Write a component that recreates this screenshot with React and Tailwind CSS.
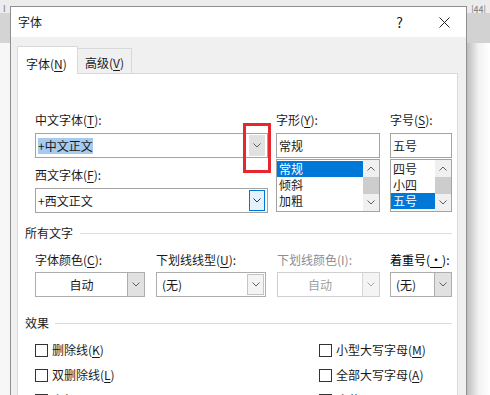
import { useState } from 'react'

function Chevron({ up = false, color = '#606060' }) {
  return (
    <svg width="8" height="5" viewBox="0 0 8 5" fill="none" stroke={color} strokeWidth="1">
      <path d={up ? 'M0.5 4.5L4 1L7.5 4.5' : 'M0.5 0.5L4 4L7.5 0.5'} />
    </svg>
  )
}

function Lbl({ text, k, end = ':' }) {
  return (
    <span className="whitespace-nowrap">
      {text}(<span className="underline underline-offset-2">{k}</span>){end}
    </span>
  )
}

function ListBox({ items, selected }) {
  return (
    <div className="mt-[1px] flex h-[53px] border border-[#a3a3a3] bg-white">
      <div className="flex-1 pt-[1px]">
        {items.map((it) => (
          <div
            key={it}
            className={
              'h-[16px] pl-[2px] leading-4 ' + (it === selected ? 'bg-[#0078d7] text-white' : '')
            }
          >
            {it}
          </div>
        ))}
      </div>
      <div className="flex w-[16px] flex-col bg-[#f0f0f0]">
        <div className="flex h-[17px] items-center justify-center">
          <Chevron up />
        </div>
        <div className="h-[17px] bg-[#cdcdcd]" />
        <div className="flex flex-1 items-center justify-center">
          <Chevron />
        </div>
      </div>
    </div>
  )
}

function Combo({ value, center, button = 'bg-[#e1e1e1] border-l border-[#adadad]', disabled }) {
  return (
    <div
      className={
        'flex h-[25px] border bg-white ' + (disabled ? 'border-[#cfcfcf] text-[#a0a0a0]' : 'border-[#adadad]')
      }
    >
      <div className={'flex flex-1 items-center ' + (center ? 'justify-center' : 'pl-[5px]')}>{value}</div>
      <div className={'flex w-[17px] items-center justify-center ' + button}>
        <Chevron color={disabled ? '#a8a8a8' : '#606060'} />
      </div>
    </div>
  )
}

function Section({ title, gap }) {
  return (
    <div className="flex h-4 items-center">
      <span>{title}</span>
      <div className={'h-px flex-1 bg-[#dcdcdc] ' + gap} />
    </div>
  )
}

function Check({ label }) {
  return (
    <div className="flex h-4 items-center">
      <span className="h-[13px] w-[13px] border border-[#333] bg-white" />
      <span className="ml-[4px]">{label}</span>
    </div>
  )
}

export default function App() {
  const [tab] = useState('font')

  return (
    <div className="relative h-[395px] w-[490px] overflow-hidden bg-white font-['Noto_Sans_CJK_SC','Noto_Sans',sans-serif] text-[12px] leading-4 text-[#1a1a1a]">
      {/* Word window behind the dialog */}
      <div className="flex h-[13px] bg-[#ececec] text-[9px] leading-3 text-[#777]">
        <span className="w-[12px] pl-[3px] pt-[3px]">I</span>
        <div className="flex flex-1 gap-[28px] pl-[40px] pt-[4px]">
          <span>40</span><span>·</span><span>42</span><span>·</span><span>44</span><span>·</span><span>46</span>
        </div>
        <span className="pl-[3px] pr-[4px] pt-[4px]">|44|</span>
      </div>
      <div className="flex h-[30px]">
        <div className="w-[10px] bg-[#d4d4d4]" />
        <div className="flex-1" />
        <div className="w-[23px] bg-[#d2d2d2]" />
      </div>
      <div className="flex h-[352px]">
        <div className="w-[10px] bg-[#f7f7f7]" />
        <div className="flex-1" />
        <div className="w-[23px] bg-gradient-to-r from-[#bdbdbd] via-[#f2f2f2] to-white" />
      </div>

      {/* Font dialog */}
      <div className="absolute left-[10px] top-[6px] h-[400px] w-[457px] border border-[#8f8f8f] bg-[#f0f0f0]">
        <div className="flex h-[30px] items-center bg-white pl-[7px]">
          <span>字体</span>
          <span className="ml-auto text-[14px]">?</span>
          <svg className="ml-[36px] mr-[16px]" width="11" height="11" viewBox="0 0 11 11" stroke="#222" strokeWidth="1">
            <path d="M0.5 0.5L10.5 10.5M10.5 0.5L0.5 10.5" />
          </svg>
        </div>

        <div className="pl-[6px] pt-[9px]">
          <div className="flex items-end">
            <div className="relative z-10 -mb-px flex h-[28px] w-[61px] border border-b-0 border-[#d9d9d9] bg-white pl-[8px] pt-[9px]">
              {tab === 'font' && <Lbl text="字体" k="N" end="" />}
            </div>
            <div className="flex h-[25px] w-[54px] border border-b-0 border-l-0 border-[#d9d9d9] pl-[7px] pt-[6px]">
              <Lbl text="高级" k="V" end="" />
            </div>
          </div>

          <div className="h-[330px] w-[441px] border border-[#d9d9d9] bg-white pl-[7px] pr-[5px] pt-[38px]">
            <div className="flex pl-[10px]">
              <div className="relative w-[233px]">
                <Lbl text="中文字体" k="T" />
                <div className="mt-[5px] flex h-[25px] items-center border border-[#a3a3a3] px-[2px]">
                  <span className="bg-[#a6cbee]">+中文正文</span>
                  <div className="ml-auto flex h-[21px] w-[16px] items-center justify-center bg-[#e1e1e1]">
                    <Chevron />
                  </div>
                </div>
                <div className="mt-[9px]">
                  <Lbl text="西文字体" k="F" />
                </div>
                <div className="mt-[5px] flex h-[25px] items-center border border-[#a3a3a3] px-[2px]">
                  <span>+西文正文</span>
                  <div className="ml-auto flex h-[21px] w-[16px] items-center justify-center border border-[#0078d7] bg-[#e5f1fb]">
                    <Chevron color="#333" />
                  </div>
                </div>
                <div className="absolute left-[208px] top-[11px] h-[50px] w-[28px] border-[3px] border-[#e8262e]" />
              </div>

              <div className="ml-[8px] w-[104px]">
                <Lbl text="字形" k="Y" />
                <div className="mt-[5px] flex h-[25px] items-center border border-[#a3a3a3] pl-[2px]">常规</div>
                <ListBox items={['常规', '倾斜', '加粗']} selected="常规" />
              </div>

              <div className="ml-[10px] w-[62px]">
                <Lbl text="字号" k="S" />
                <div className="mt-[5px] flex h-[25px] items-center border border-[#a3a3a3] pl-[2px]">五号</div>
                <ListBox items={['四号', '小四', '五号']} selected="五号" />
              </div>
            </div>

            <div className="mt-[12px]">
              <Section title="所有文字" gap="ml-[7px]" />
            </div>

            <div className="mt-[11px] flex pl-[10px]">
              <div className="w-[110px]">
                <Lbl text="字体颜色" k="C" />
                <div className="mt-[4px]">
                  <Combo value="自动" center />
                </div>
              </div>
              <div className="ml-[11px] w-[110px]">
                <Lbl text="下划线线型" k="U" />
                <div className="mt-[4px]">
                  <Combo value="(无)" button="bg-[#f4f4f4] border border-[#c4c4c4] my-[1px] mr-[1px]" />
                </div>
              </div>
              <div className="ml-[11px] w-[103px]">
                <span className="whitespace-nowrap text-[#8d8d8d]">下划线颜色(I):</span>
                <div className="mt-[4px]">
                  <Combo value="自动" center disabled button="bg-[#f4f4f4] border-l border-[#d6d6d6]" />
                </div>
              </div>
              <div className="ml-[10px] w-[62px]">
                <span className="whitespace-nowrap text-black">
                  着重号(<span className="underline underline-offset-2">·</span>):
                </span>
                <div className="mt-[4px]">
                  <Combo value="(无)" />
                </div>
              </div>
            </div>

            <div className="mt-[18px]">
              <Section title="效果" gap="ml-[6px]" />
            </div>

            <div className="mt-[11px] flex pl-[10px]">
              <div className="flex w-[284px] flex-col gap-[9px]">
                <Check label={<Lbl text="删除线" k="K" end="" />} />
                <Check label={<Lbl text="双删除线" k="L" end="" />} />
                <Check label={<Lbl text="上标" k="P" end="" />} />
              </div>
              <div className="flex flex-col gap-[9px]">
                <Check label={<Lbl text="小型大写字母" k="M" end="" />} />
                <Check label={<Lbl text="全部大写字母" k="A" end="" />} />
                <Check label={<Lbl text="隐藏" k="H" end="" />} />
              </div>
            </div>
          </div>
        </div>
      </div>
    </div>
  )
}
